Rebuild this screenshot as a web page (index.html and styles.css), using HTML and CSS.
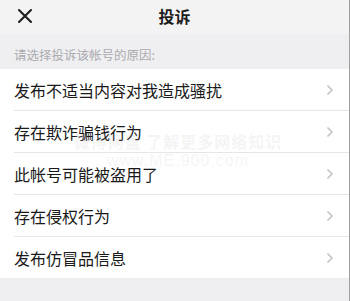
FILE: index.html
```html
<!DOCTYPE html>
<html lang="zh-CN">
<head>
<meta charset="utf-8">
<link rel="stylesheet" href="styles.css">
</head>
<body>
<div class="screen">
  <header class="topbar">
    <span class="close">
      <svg width="16" height="16" viewBox="0 0 16 16"><path d="M2 2 L14 14 M14 2 L2 14" stroke="#1e1e1e" stroke-width="2.1" fill="none" stroke-linecap="round"/></svg>
    </span>
    <h1 class="title">投诉</h1>
  </header>
  <div class="hint">请选择投诉该帐号的原因:</div>
  <ul class="list">
    <li class="row"><span>发布不适当内容对我造成骚扰</span><svg class="chev" width="8" height="12" viewBox="0 0 8 12"><path d="M1.5 1.5 L6 6 L1.5 10.5" stroke="#c4c4c8" stroke-width="1.6" fill="none"/></svg></li>
    <li class="row"><span>存在欺诈骗钱行为</span><svg class="chev" width="8" height="12" viewBox="0 0 8 12"><path d="M1.5 1.5 L6 6 L1.5 10.5" stroke="#c4c4c8" stroke-width="1.6" fill="none"/></svg></li>
    <li class="row"><span>此帐号可能被盗用了</span><svg class="chev" width="8" height="12" viewBox="0 0 8 12"><path d="M1.5 1.5 L6 6 L1.5 10.5" stroke="#c4c4c8" stroke-width="1.6" fill="none"/></svg></li>
    <li class="row"><span>存在侵权行为</span><svg class="chev" width="8" height="12" viewBox="0 0 8 12"><path d="M1.5 1.5 L6 6 L1.5 10.5" stroke="#c4c4c8" stroke-width="1.6" fill="none"/></svg></li>
    <li class="row"><span>发布仿冒品信息</span><svg class="chev" width="8" height="12" viewBox="0 0 8 12"><path d="M1.5 1.5 L6 6 L1.5 10.5" stroke="#c4c4c8" stroke-width="1.6" fill="none"/></svg></li>
  </ul>
  <div class="watermark">
    <div class="wm1">微博网盘 了解更多网络知识</div>
    <div class="wm2">www.ME.900.com</div>
  </div>
</div>
</body>
</html>
```
FILE: styles.css
```css
* { box-sizing: border-box; margin: 0; padding: 0; }
html, body { width: 350px; height: 301px; overflow: hidden; }
body {
  background: #efeff1;
  font-family: "Noto Sans CJK SC", "Noto Sans", sans-serif;
}
.screen {
  position: relative;
  width: 350px;
  height: 301px;
  background: #efeff1;
  border-right: 1px solid #a0a0a0;
}
.topbar {
  height: 34px;
  background: #f3f3f3;
  display: flex;
  align-items: center;
  justify-content: center;
  position: relative;
}
.close {
  position: absolute;
  left: 17px;
  top: 8px;
  width: 16px;
  height: 16px;
  display: flex;
}
.title {
  font-size: 16px;
  font-weight: 700;
  color: #1e1e1e;
  line-height: 34px;
  margin-top: -2px;
}
.hint {
  height: 35px;
  padding: 13px 0 0 14px;
  font-size: 12.5px;
  line-height: 16px;
  color: #ababb0;
}
.list {
  list-style: none;
  background: #ffffff;
}
.row {
  height: 42px;
  margin-left: 14px;
  padding-right: 15px;
  border-bottom: 1px solid #e6e6e8;
  display: flex;
  align-items: center;
  justify-content: space-between;
  font-size: 16px;
  color: #1a1a1a;
}
.row:last-child { border-bottom: none; height: 41px; }
.row span { line-height: 20px; }
.watermark {
  position: absolute;
  left: 62px;
  top: 131px;
  width: 232px;
  text-align: center;
  color: rgba(190, 190, 196, 0.16);
  pointer-events: none;
}
.wm1 { font-size: 16px; line-height: 20px; font-weight: 700; letter-spacing: 1px; }
.wm2 { font-size: 16px; line-height: 20px; font-family: "Liberation Sans", sans-serif; letter-spacing: 1px; }
```
